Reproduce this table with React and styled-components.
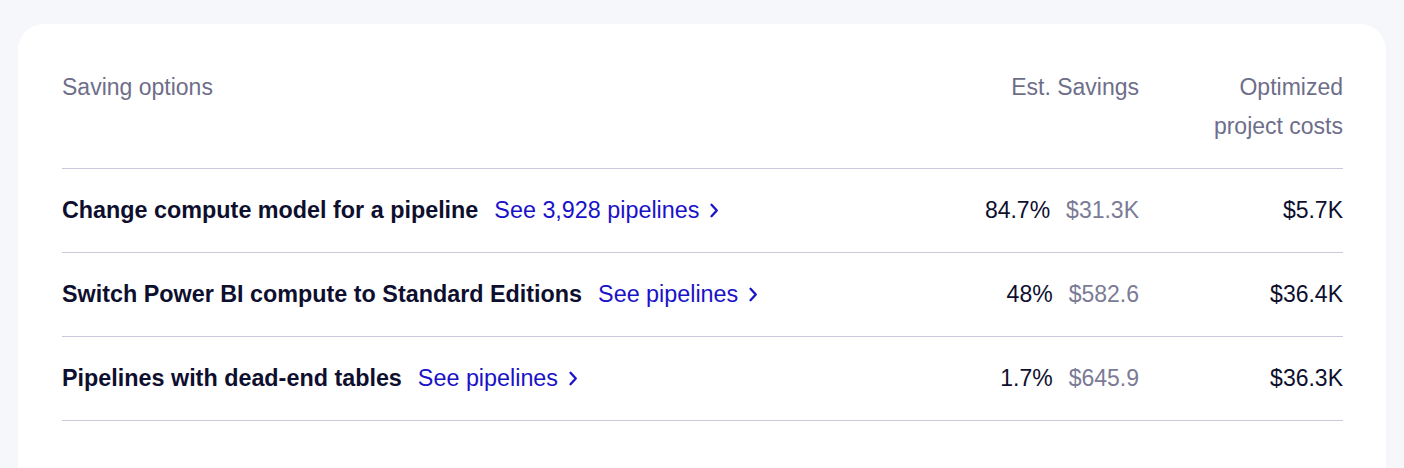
import React from "react";
import styled, { createGlobalStyle } from "styled-components";

const Global = createGlobalStyle`
  html, body { margin: 0; background: #f6f7fb; }
  body { font-family: "Liberation Sans", Arial, sans-serif; }
`;

const Page = styled.div`
  padding: 24px 18px 0 18px;
  height: 468px;
  box-sizing: border-box;
  overflow: hidden;
`;

const Card = styled.div`
  background: #ffffff;
  border-radius: 26px 26px 0 0;
  padding: 44px 43px 60px 44px;
`;

const Row = styled.div`
  display: grid;
  grid-template-columns: 1fr 260px 204px;
  align-items: ${(p) => (p.$head ? "start" : "center")};
  border-bottom: 1px solid #c9c9de;
  padding: ${(p) => (p.$head ? "0 0 22px" : "0")};
  height: ${(p) => (p.$head ? "auto" : "83px")};
  font-size: 23px;
  line-height: 39px;
`;

const HeadCell = styled.div`
  color: #6e6e8a;
  text-align: ${(p) => (p.$right ? "right" : "left")};
`;

const Option = styled.div`
  display: flex;
  align-items: center;
  gap: 16px;
`;

const Title = styled.span`
  font-weight: 700;
  font-size: 23.35px;
  color: #0e0f2e;
`;

const Link = styled.a`
  display: inline-flex;
  align-items: center;
  gap: 10px;
  font-size: 23.35px;
  color: #1a12c8;
  text-decoration: none;
  cursor: pointer;
`;

const Savings = styled.div`
  display: flex;
  justify-content: flex-end;
  gap: 16px;
`;

const Pct = styled.span`
  color: #0e0f2e;
`;

const Amount = styled.span`
  color: #7b7b96;
`;

const Cost = styled.div`
  color: #0e0f2e;
  text-align: right;
`;

const Chevron = () => (
  <svg width="10" height="15" viewBox="0 0 10 15" fill="none">
    <polyline points="2.5,1.8 7.8,7.5 2.5,13.2" stroke="#1a12c8" strokeWidth="2.3" strokeLinecap="round" strokeLinejoin="round" />
  </svg>
);

const rows = [
  { title: "Change compute model for a pipeline", link: "See 3,928 pipelines", pct: "84.7%", amount: "$31.3K", cost: "$5.7K" },
  { title: "Switch Power BI compute to Standard Editions", link: "See pipelines", pct: "48%", amount: "$582.6", cost: "$36.4K" },
  { title: "Pipelines with dead-end tables", link: "See pipelines", pct: "1.7%", amount: "$645.9", cost: "$36.3K" },
];

export default function App() {
  return (
    <>
      <Global />
      <Page>
        <Card>
          <Row $head>
            <HeadCell>Saving options</HeadCell>
            <HeadCell $right>Est. Savings</HeadCell>
            <HeadCell $right>
              Optimized
              <br />
              project costs
            </HeadCell>
          </Row>
          {rows.map((r) => (
            <Row key={r.title}>
              <Option>
                <Title>{r.title}</Title>
                <Link>
                  {r.link}
                  <Chevron />
                </Link>
              </Option>
              <Savings>
                <Pct>{r.pct}</Pct>
                <Amount>{r.amount}</Amount>
              </Savings>
              <Cost>{r.cost}</Cost>
            </Row>
          ))}
        </Card>
      </Page>
    </>
  );
}
